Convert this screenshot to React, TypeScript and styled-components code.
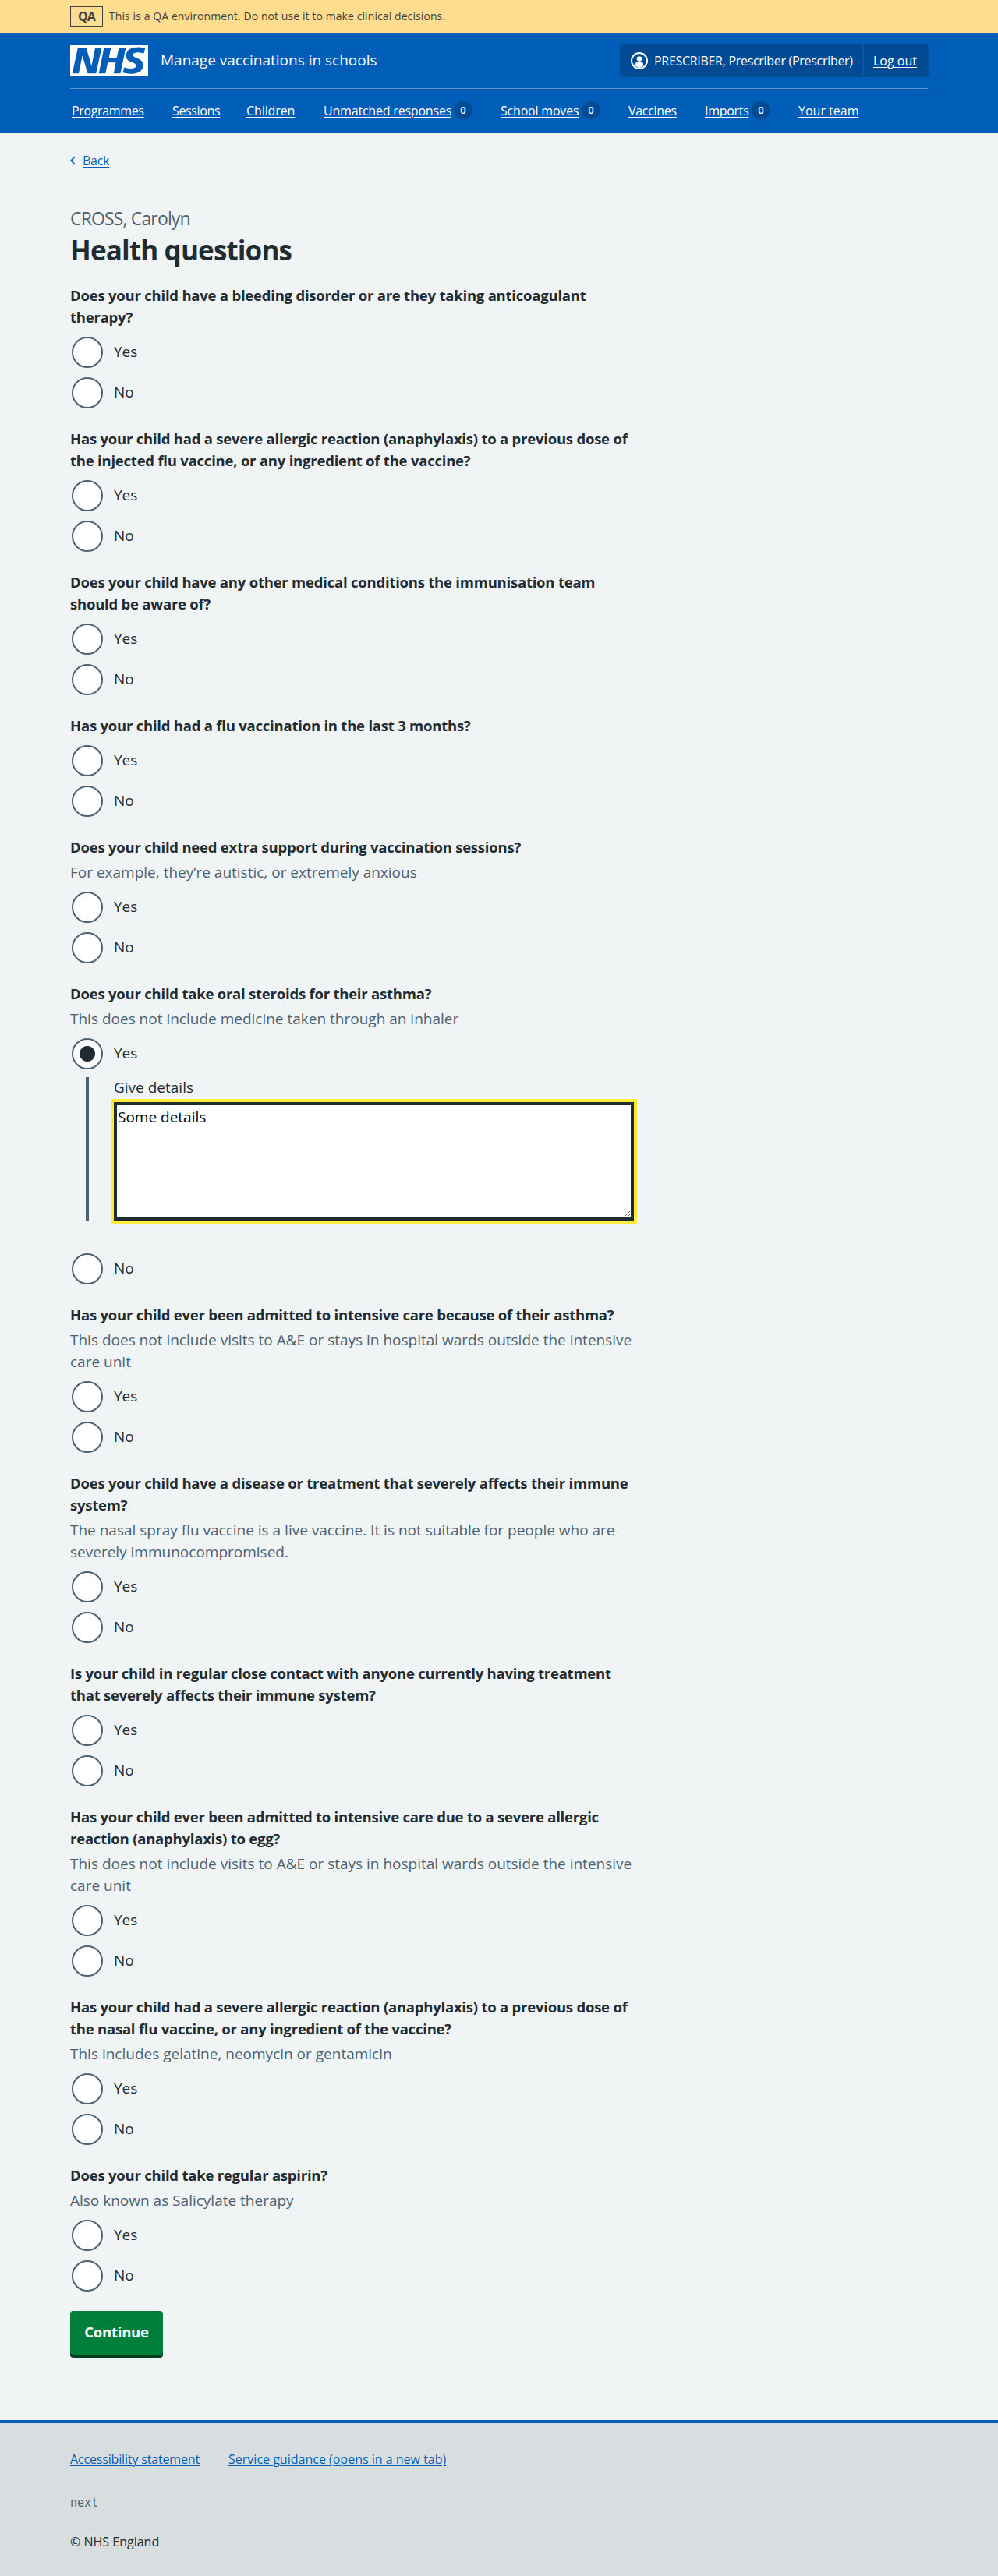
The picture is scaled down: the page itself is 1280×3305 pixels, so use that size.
import React from 'react';
import styled, { createGlobalStyle } from 'styled-components';

const GlobalStyle = createGlobalStyle`
  *, *::before, *::after { box-sizing: border-box; }
  body {
    margin: 0;
    background: #f0f4f5;
    color: #212b32;
    font-family: "Open Sans", "Noto Sans", Arial, sans-serif;
    font-size: 19px;
    line-height: 28px;
  }
`;

const Container = styled.div`
  width: 1100px;
  margin: 0 auto;
`;

const Link = styled.a<{ $tracking?: number }>`
  color: inherit;
  letter-spacing: ${p => p.$tracking ?? 0}px;
  text-decoration: underline;
  text-decoration-thickness: 1px;
  text-underline-offset: 2px;
`;

const Banner = styled.div`
  height: 42px;
  background: #ffdc8e;
  color: #403f3e;
`;

const BannerRow = styled(Container)`
  display: flex;
  align-items: center;
  gap: 8px;
  height: 42px;
`;

const EnvTag = styled.strong`
  width: 42px;
  height: 26px;
  border: 1px solid currentColor;
  font-size: 16px;
  font-weight: 700;
  line-height: 24px;
  letter-spacing: -0.8px;
  text-align: center;
`;

const BannerText = styled.span`
  font-size: 14px;
  line-height: 22px;
  letter-spacing: 0.085px;
`;

const Header = styled.header`
  height: 128px;
  background: #005eb8;
  color: #fff;
`;

const HeaderTop = styled(Container)`
  display: flex;
  align-items: center;
  height: 72px;
  border-bottom: 1px solid #5a94d0;
`;

const Logo = styled.svg`
  display: block;
  width: 100px;
  height: 40px;
`;

const ServiceName = styled.span`
  margin-left: 16px;
  padding-bottom: 1px;
`;

const Account = styled.div`
  display: flex;
  height: 42px;
  margin: 0 -1px 0 auto;
  border-radius: 4px;
  background: #004b93;
  font-size: 16px;
  line-height: 24px;
`;

const AccountUser = styled.div`
  display: flex;
  align-items: center;
  width: 313px;
  margin: 1px 0;
  padding-left: 14px;
  border-right: 1px solid #005eb8;

  svg { flex: none; width: 22px; height: 22px; margin-right: 8px; }
`;

const AccountName = styled.span`
  letter-spacing: -0.3px;
  white-space: nowrap;
`;

const AccountAction = styled.div`
  padding: 9px 0 0 12px;
  width: 83px;
`;

const Nav = styled(Container).attrs({ as: 'nav' })`
  display: flex;
  gap: 36px;
  padding: 16px 0 0 2px;
  font-size: 16px;
  line-height: 24px;
  white-space: nowrap;
`;

const NavItem = styled.div<{ $w: number }>`
  display: flex;
  width: ${p => p.$w}px;
`;

const Count = styled.span`
  width: 24px;
  height: 23px;
  margin: 0 0 0 auto;
  border-radius: 12px;
  background: #004b93;
  font-size: 13px;
  font-weight: 600;
  line-height: 23px;
  text-align: center;
`;

const Main = styled(Container).attrs({ as: 'main' })`
  height: 2935px;
  padding-top: 24px;
`;

const BackLink = styled.div`
  display: flex;
  align-items: center;
  gap: 9px;
  height: 24px;
  color: #005eb8;
  font-size: 16px;
  line-height: 24px;

  svg { width: 7px; height: 12px; margin-bottom: 1px; }
`;

const Column = styled.div`
  width: 723px;
`;

const Caption = styled.span`
  display: block;
  margin-top: 45px;
  color: #4c6272;
  font-size: 23px;
  line-height: 34px;
  letter-spacing: -0.85px;
`;

const Title = styled.h1`
  margin: 0 0 22px;
  padding-top: 1px;
  font-size: 35px;
  font-weight: 700;
  line-height: 45px;
  letter-spacing: -0.85px;
`;

const Fieldset = styled.fieldset`
  min-width: 0;
  margin: 0 0 25px;
  padding: 0;
  border: 0;
`;

const Legend = styled.legend`
  padding: 0;
  font-size: 18.5px;
  font-weight: 700;
  letter-spacing: -0.22px;
`;

const Hint = styled.div`
  margin-top: 4px;
  color: #4c6272;
`;

const Radios = styled.div`
  display: grid;
  gap: 12px;
  margin-top: 11px;
`;

const Radio = styled.label`
  display: flex;
  align-items: center;
  height: 40px;
`;

const Dot = styled.span<{ $checked?: boolean }>`
  width: 40px;
  height: 40px;
  margin: 0 14px 0 2px;
  border: 2px solid #4c6272;
  border-radius: 50%;
  background: ${p => (p.$checked ? 'radial-gradient(circle, #212b32 9.5px, #fff 10.5px)' : '#fff')};
`;

const RadioText = styled.span`
  padding-bottom: 3px;
`;

const Conditional = styled.div`
  display: flex;
  flex-direction: column;
  height: 184px;
  margin: -2px 0 30px 20px;
  padding-left: 32px;
  border-left: 4px solid #4c6272;
`;

const DetailsLabel = styled.label`
  margin: -1px 0 5px;
`;

const Textarea = styled.textarea`
  display: block;
  width: 667px;
  height: 152px;
  margin: 0;
  padding: 1px;
  border: 4px solid #212b32;
  border-radius: 0;
  outline: 4px solid #ffeb3b;
  background: #fff;
  color: #000;
  font: inherit;
  resize: vertical;
`;

const Button = styled.button`
  display: block;
  width: 119px;
  height: 56px;
  padding: 0 0 3px;
  border: 0;
  border-radius: 4px;
  background: #007f3b;
  box-shadow: 0 4px 0 #00401e;
  color: #fff;
  font: inherit;
  font-size: 18.5px;
  font-weight: 700;
  letter-spacing: -0.25px;
`;

const Footer = styled.footer`
  height: 200px;
  padding-top: 34px;
  border-top: 4px solid #005eb8;
  background: #d8dde0;
  font-size: 16px;
  line-height: 24px;
`;

const FooterLinks = styled.div`
  display: flex;
  gap: 37px;
  color: #005eb8;
`;

const Release = styled.div`
  margin-top: 32px;
  color: #4c6272;
  font-family: "DejaVu Sans Mono", monospace;
  font-size: 15px;
  line-height: 24px;
`;

const Copyright = styled.div`
  margin-top: 26px;
`;

const NAV: { label: string; width: number; count?: number; tracking: number }[] = [
  { label: 'Programmes', width: 93, tracking: -0.35 },
  { label: 'Sessions', width: 59, tracking: -0.35 },
  { label: 'Children', width: 63, tracking: -0.1 },
  { label: 'Unmatched responses', width: 191, count: 0, tracking: -0.2 },
  { label: 'School moves', width: 128, count: 0, tracking: -0.2 },
  { label: 'Vaccines', width: 62, tracking: -0.3 },
  { label: 'Imports', width: 84, count: 0, tracking: -0.3 },
  { label: 'Your team', width: 77, tracking: 0 },
];

const ADMITTED_HINT =
  'This does not include visits to A&E or stays in hospital wards outside the intensive care unit';

const QUESTIONS: { text: string; hint?: string; details?: string }[] = [
  { text: 'Does your child have a bleeding disorder or are they taking anticoagulant therapy?' },
  { text: 'Has your child had a severe allergic reaction (anaphylaxis) to a previous dose of the injected flu vaccine, or any ingredient of the vaccine?' },
  { text: 'Does your child have any other medical conditions the immunisation team should be aware of?' },
  { text: 'Has your child had a flu vaccination in the last 3 months?' },
  { text: 'Does your child need extra support during vaccination sessions?', hint: 'For example, they’re autistic, or extremely anxious' },
  { text: 'Does your child take oral steroids for their asthma?', hint: 'This does not include medicine taken through an inhaler', details: 'Some details' },
  { text: 'Has your child ever been admitted to intensive care because of their asthma?', hint: ADMITTED_HINT },
  { text: 'Does your child have a disease or treatment that severely affects their immune system?', hint: 'The nasal spray flu vaccine is a live vaccine. It is not suitable for people who are severely immunocompromised.' },
  { text: 'Is your child in regular close contact with anyone currently having treatment that severely affects their immune system?' },
  { text: 'Has your child ever been admitted to intensive care due to a severe allergic reaction (anaphylaxis) to egg?', hint: ADMITTED_HINT },
  { text: 'Has your child had a severe allergic reaction (anaphylaxis) to a previous dose of the nasal flu vaccine, or any ingredient of the vaccine?', hint: 'This includes gelatine, neomycin or gentamicin' },
  { text: 'Does your child take regular aspirin?', hint: 'Also known as Salicylate therapy' },
];

function Question({ text, hint, details }: { text: string; hint?: string; details?: string }) {
  return (
    <Fieldset>
      <Legend>{text}</Legend>
      {hint && <Hint>{hint}</Hint>}
      <Radios>
        <Radio><Dot $checked={!!details} /><RadioText>Yes</RadioText></Radio>
        {details && (
          <Conditional>
            <DetailsLabel>Give details</DetailsLabel>
            <Textarea defaultValue={details} />
          </Conditional>
        )}
        <Radio><Dot /><RadioText>No</RadioText></Radio>
      </Radios>
    </Fieldset>
  );
}

export default function App() {
  return (
    <>
      <GlobalStyle />
      <Banner>
        <BannerRow>
          <EnvTag>QA</EnvTag>
          <BannerText>This is a QA environment. Do not use it to make clinical decisions.</BannerText>
        </BannerRow>
      </Banner>
      <Header>
        <HeaderTop>
          <Logo viewBox="0 0 200 80" role="img" aria-label="NHS">
            <path fill="#fff" fillRule="evenodd" d="M200 0v80H0V0h200Zm-27.5 5.5c-14.5 0-29 5-29 22 0 10.2 7.7 13.5 14.7 16.3l.7.3c5.4 2 10.1 3.9 10.1 8.4 0 6.5-8.5 7.5-14 7.5s-12.5-1.5-16-3.5L135 70c5.5 2 13.5 3.5 20 3.5 15.5 0 32-4.5 32-22.5 0-19.5-25.5-16.5-25.5-25.5 0-5.5 5.5-7 12.5-7a35 35 0 0 1 14.5 3l4-13.5c-4.5-2-12-3-20-3Zm-131 2h-22l-14 65H22l9-45h.5l13.5 45h21.5l14-65H64l-9 45h-.5l-13-45Zm63 0h-18l-13 65h17l6-28H117l-5.5 28H129l13.5-65H125L119.5 32h-20l5-24.5Z" />
          </Logo>
          <ServiceName>Manage vaccinations in schools</ServiceName>
          <Account>
            <AccountUser>
              <svg viewBox="0 0 22 22" aria-hidden="true">
                <circle cx="11" cy="11" r="10" fill="none" stroke="#fff" strokeWidth="2" />
                <circle cx="11" cy="8.6" r="3.3" fill="#fff" />
                <path fill="#fff" d="M6 17.5v-2.1a2.6 2.6 0 0 1 2.6-2.6h4.8a2.6 2.6 0 0 1 2.6 2.6v2.1L11 20.5Z" />
              </svg>
              <AccountName>PRESCRIBER, Prescriber (Prescriber)</AccountName>
            </AccountUser>
            <AccountAction><Link>Log out</Link></AccountAction>
          </Account>
        </HeaderTop>
        <Nav>
          {NAV.map(item => (
            <NavItem key={item.label} $w={item.width}>
              <Link $tracking={item.tracking}>{item.label}</Link>
              {item.count !== undefined && <Count>{item.count}</Count>}
            </NavItem>
          ))}
        </Nav>
      </Header>
      <Main>
        <BackLink>
          <svg viewBox="0 0 7 12" aria-hidden="true">
            <path d="M6 1 1.3 6 6 11" fill="none" stroke="#005eb8" strokeWidth="1.8" />
          </svg>
          <Link $tracking={-0.3}>Back</Link>
        </BackLink>
        <Column>
          <Caption>CROSS, Carolyn</Caption>
          <Title>Health questions</Title>
          {QUESTIONS.map(q => <Question key={q.text} {...q} />)}
          <Button>Continue</Button>
        </Column>
      </Main>
      <Footer>
        <Container>
          <FooterLinks>
            <Link $tracking={-0.16}>Accessibility statement</Link>
            <Link>Service guidance (opens in a new tab)</Link>
          </FooterLinks>
          <Release>next</Release>
          <Copyright>© NHS England</Copyright>
        </Container>
      </Footer>
    </>
  );
}
